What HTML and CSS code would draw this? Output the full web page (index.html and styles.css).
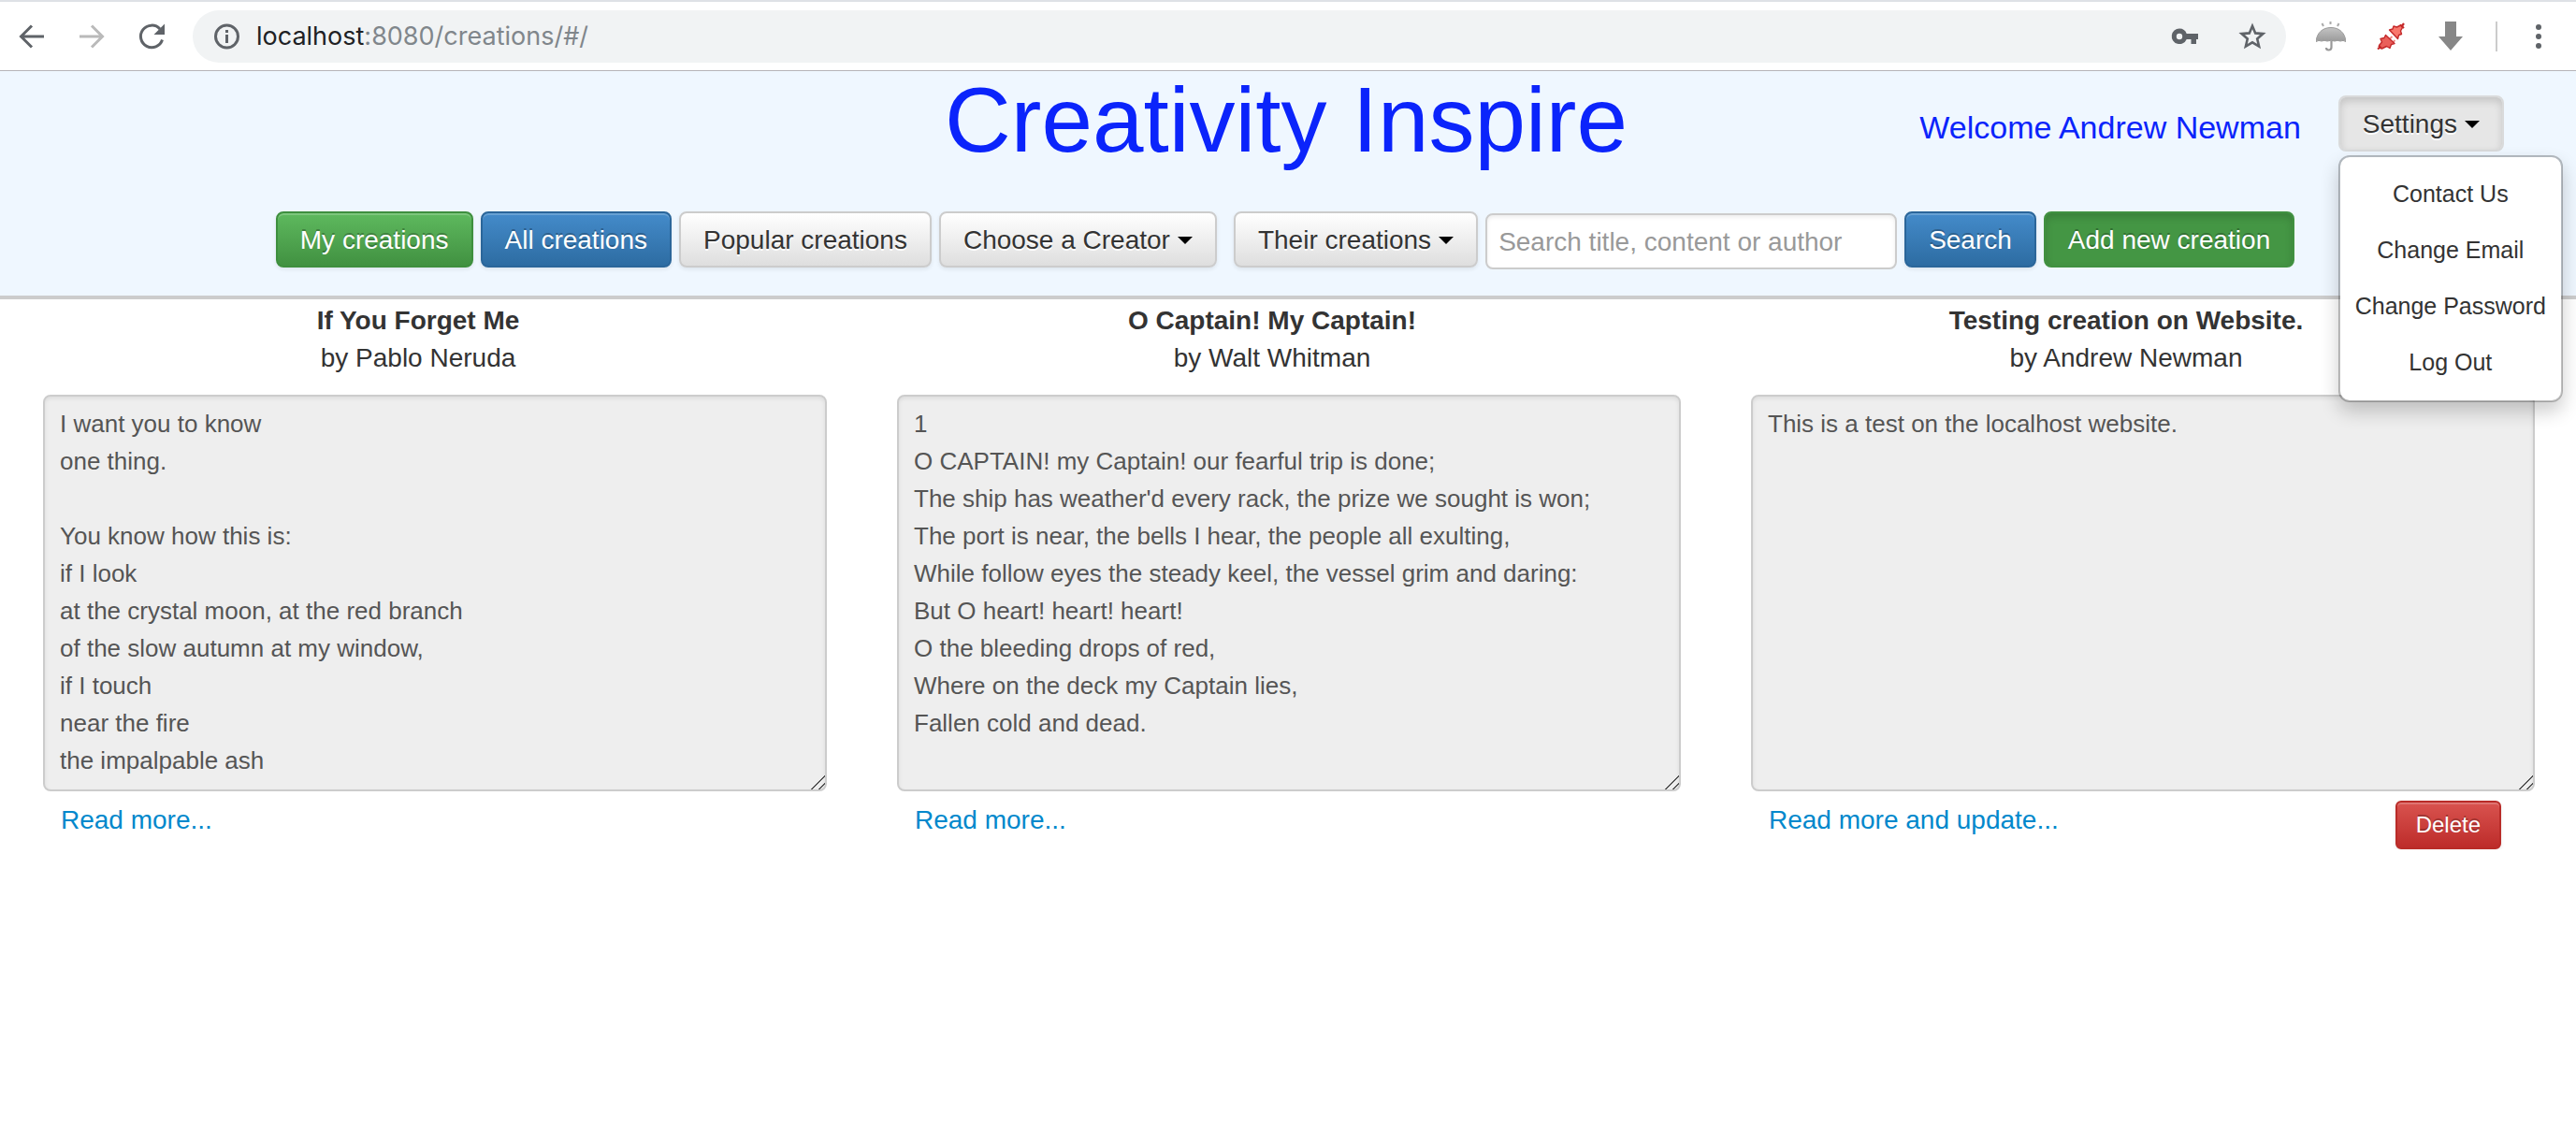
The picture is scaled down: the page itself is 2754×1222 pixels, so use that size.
FILE: index.html
```html
<!DOCTYPE html>
<html lang="en">
<head>
  <meta charset="utf-8">
  <title>Creativity Inspire</title>
  <link rel="stylesheet" href="styles.css">
</head>
<body>
  <div class="toolbar">
    <div class="nav-icons">
      <button class="icon-btn" type="button" aria-label="Back">
        <svg class="icon" viewBox="0 0 32 32"><path d="M29 16H5M16 4.500L4.500 16L16 27.500" fill="none" stroke="#5f6368" stroke-width="3"/></svg>
      </button>
      <button class="icon-btn" type="button" aria-label="Forward">
        <svg class="icon" viewBox="0 0 32 32"><path d="M3 16H27M16 4.500L27.500 16L16 27.500" fill="none" stroke="#bababa" stroke-width="3"/></svg>
      </button>
      <button class="icon-btn" type="button" aria-label="Reload">
        <svg class="icon" viewBox="0 0 32 32"><path d="M27.500 19.500A11.800 11.800 0 1 1 25 8" fill="none" stroke="#5f6368" stroke-width="3"/><path d="M30 2.500V14H18.500Z" fill="#5f6368"/></svg>
      </button>
    </div>
    <div class="omnibox">
      <svg class="icon" viewBox="0 0 32 32"><circle cx="16.500" cy="16" r="12" fill="none" stroke="#5f6368" stroke-width="3"/><path d="M15 9h3v3h-3zM15 14h3v9h-3z" fill="#5f6368"/></svg>
      <span class="url">localhost<span class="url-path">:8080/creations/#/</span></span>
      <button class="icon-btn key" type="button" aria-label="Saved password">
        <svg class="icon" viewBox="0 0 32 32"><path fill-rule="evenodd" d="M10 7.500a8.300 8.300 0 0 1 7.700 5.500H30v6h-2v5h-5.500v-5h-4.800A8.300 8.300 0 1 1 10 7.500zM10 12.800a3.200 3.200 0 1 0 0 6.400a3.200 3.200 0 0 0 0-6.400z" fill="#5f6368"/></svg>
      </button>
      <button class="icon-btn" type="button" aria-label="Bookmark">
        <svg class="icon" viewBox="0 0 32 32"><path d="M16 4.800L19.200 12.400L27.400 13.100L21.200 18.500L23.100 26.500L16 22.300L8.900 26.500L10.800 18.500L4.600 13.100L12.800 12.400Z" fill="none" stroke="#5f6368" stroke-width="2.600"/></svg>
      </button>
    </div>
    <div class="extensions">
      <button class="icon-btn" type="button" aria-label="Umbrella extension">
        <svg class="icon" viewBox="0 0 32 32">
          <defs><linearGradient id="dome" x1="0" y1="0" x2="0" y2="1"><stop offset="0" stop-color="#c4c4c4"/><stop offset="1" stop-color="#999"/></linearGradient></defs>
          <path d="M6.500 2l1.500 3M15.500 0v3M24.500 2l-1.500 3" stroke="#aaa" stroke-width="2"/>
          <path d="M0 21.500C1 12 7 6.500 16 6.500S31 12 32 21.500Q29 19.500 26 21Q23 19.500 20 21Q16 19.500 12 21Q9 19.500 6 21Q3 19.500 0 21.500Z" fill="url(#dome)" stroke="#999" stroke-width="1"/>
          <path d="M16.500 21V27.500Q16.500 30.500 13.500 30.500Q11 30.500 11 28" fill="none" stroke="#999" stroke-width="2.200"/>
        </svg>
      </button>
      <button class="icon-btn" type="button" aria-label="Connection extension">
        <svg class="icon" viewBox="0 0 32 32">
          <g stroke="#c4292a" stroke-width="1.400" stroke-linejoin="round" fill="#f9776c">
            <path d="M2 29.500L4.500 27.500M3 26L6 29M26 3.500L30 7M27.500 5.500L30 2" fill="none" stroke-width="2.200"/>
            <path d="M14 19.500L17.500 16M17.500 23L20.500 20" fill="none" stroke-width="1.800" stroke="#f08a84"/>
            <path d="M3.500 25.500L6.500 22L5 18.500L9 17.500L10.500 14.500L20 23.500L16.500 24.500L15 28.500L11.500 26.500L6.500 29Z" fill="#ea5f5a"/>
            <path d="M14.500 9L18 8L19 5L22.500 6L26.500 4L28.500 6.500L26.500 10L27.500 13.500L24.500 14.500L23.500 18.500Z"/>
          </g>
        </svg>
      </button>
      <button class="icon-btn" type="button" aria-label="Download extension">
        <svg class="icon" viewBox="0 0 32 32"><path d="M10 0H22V16H29L16 31L3 16H10Z" fill="#878787"/></svg>
      </button>
      <span class="separator"></span>
      <button class="icon-btn" type="button" aria-label="Menu">
        <svg class="icon" viewBox="0 0 32 32" fill="#5f6368"><circle cx="16" cy="6" r="3"/><circle cx="16" cy="16" r="3"/><circle cx="16" cy="26" r="3"/></svg>
      </button>
    </div>
  </div>

  <header class="masthead">
    <div class="brand-row">
      <h1 class="brand">Creativity Inspire</h1>
      <div class="account">
        <span class="welcome">Welcome Andrew Newman</span>
        <div class="dropdown">
          <button class="btn btn-default active" type="button" aria-expanded="true">Settings <span class="caret"></span></button>
          <ul class="menu">
            <li><a href="#contact">Contact Us</a></li>
            <li><a href="#email">Change Email</a></li>
            <li><a href="#password">Change Password</a></li>
            <li><a href="#logout">Log Out</a></li>
          </ul>
        </div>
      </div>
    </div>
    <form class="actions">
      <button class="btn btn-success" type="button">My creations</button>
      <button class="btn btn-primary" type="button">All creations</button>
      <button class="btn btn-default" type="button">Popular creations</button>
      <button class="btn btn-default creator" type="button">Choose a Creator <span class="caret"></span></button>
      <button class="btn btn-default" type="button">Their creations <span class="caret"></span></button>
      <input class="search" type="text" placeholder="Search title, content or author" aria-label="Search title, content or author">
      <button class="btn btn-primary" type="button">Search</button>
      <button class="btn btn-success active" type="button">Add new creation</button>
    </form>
  </header>

  <main class="creations">
    <article class="creation">
      <label class="heading" for="c1"><strong>If You Forget Me</strong><span>by Pablo Neruda</span></label>
      <textarea class="content" id="c1" readonly>I want you to know
one thing.

You know how this is:
if I look
at the crystal moon, at the red branch
of the slow autumn at my window,
if I touch
near the fire
the impalpable ash</textarea>
      <div class="links"><a href="#more1">Read more...</a></div>
    </article>
    <article class="creation">
      <label class="heading" for="c2"><strong>O Captain! My Captain!</strong><span>by Walt Whitman</span></label>
      <textarea class="content" id="c2" readonly>1
O CAPTAIN! my Captain! our fearful trip is done;
The ship has weather'd every rack, the prize we sought is won;
The port is near, the bells I hear, the people all exulting,
While follow eyes the steady keel, the vessel grim and daring:
But O heart! heart! heart!
O the bleeding drops of red,
Where on the deck my Captain lies,
Fallen cold and dead.</textarea>
      <div class="links"><a href="#more2">Read more...</a></div>
    </article>
    <article class="creation">
      <label class="heading" for="c3"><strong>Testing creation on Website.</strong><span>by Andrew Newman</span></label>
      <textarea class="content" id="c3" readonly>This is a test on the localhost website.</textarea>
      <div class="links"><a href="#more3">Read more and update...</a><button class="btn btn-danger" type="button">Delete</button></div>
    </article>
  </main>
</body>
</html>
```
FILE: styles.css
```css
* { box-sizing: border-box; }

body {
  margin: 0;
  background: #fff;
  color: #333;
  font-family: "Liberation Sans", Arial, sans-serif;
  font-size: 28px;
  line-height: 40px;
}

/* Browser bar */
.toolbar {
  display: flex;
  align-items: center;
  height: 76px;
  padding: 0 24px 0 18px;
  background: #fff;
  border-top: 2px solid #dee1e6;
  border-bottom: 1px solid #b6b4b8;
}
.nav-icons { display: flex; gap: 32px; margin-right: 28px; }
.icon-btn { display: flex; padding: 0; border: 0; background: none; }
.icon { display: block; width: 32px; height: 32px; flex: none; }
.omnibox {
  display: flex;
  flex: 1;
  align-items: center;
  height: 56px;
  padding: 0 20px;
  border-radius: 28px;
  background: #f1f3f4;
}
.url {
  flex: 1;
  margin-left: 16px;
  color: #202124;
  font-family: Inter, Roboto, sans-serif;
  font-size: 27px;
}
.url-path { color: #80868b; }
.key { margin-right: 40px; }
.extensions { display: flex; align-items: center; gap: 32px; margin-left: 32px; }
.separator { width: 2px; height: 32px; margin-right: -4px; background: #ccc; }

/* Site header */
.masthead { background: #eff7ff; border-bottom: 4px solid #ccc; padding-bottom: 30px; }
.brand-row {
  display: grid;
  grid-template-columns: 1fr auto 1fr;
  min-height: 150px;
  padding-right: 4px;
}
.brand {
  grid-column: 2;
  margin: 0;
  color: #0b24fb;
  font-size: 98px;
  font-weight: 400;
  line-height: 104px;
}
.account {
  display: flex;
  align-items: flex-start;
  justify-content: flex-end;
  gap: 40px;
  padding: 26px 73px 0 0;
}
.welcome { margin-top: 14px; color: #0b24fb; font-size: 34px; }

.btn {
  display: inline-flex;
  align-items: center;
  justify-content: center;
  gap: 8px;
  padding: 9px 24px 7px;
  border: 2px solid;
  border-radius: 8px;
  font: inherit;
  white-space: nowrap;
  box-shadow: inset 0 2px 0 rgba(255, 255, 255, .2), 0 2px 4px rgba(0, 0, 0, .08);
}
.btn-default { color: #333; background: linear-gradient(#fff, #dedede); border-color: #ccc; text-shadow: 0 2px 0 #fff; }
.btn-success, .btn-primary, .btn-danger { color: #fff; text-shadow: 0 -2px 0 rgba(0, 0, 0, .25); }
.btn-success { background: linear-gradient(#5eb95e, #419141); border-color: #3e8f3e; }
.btn-primary { background: linear-gradient(#448bca, #2d6ca2); border-color: #2b669a; }
.btn-danger {
  padding: 4px 20px;
  border-radius: 6px;
  font-size: 24px;
  background: linear-gradient(#d9534f, #bd2c2a);
  border-color: #b92c28;
}
.btn.active { box-shadow: inset 0 4px 8px rgba(0, 0, 0, .15); }
.btn-default.active { background: #e6e6e6; border-color: #d9dadb; }
.btn-success.active { background: #449644; border-color: #419141; }

.caret { border: 8px solid transparent; border-top-color: #000; border-bottom: 0; }

.dropdown { position: relative; }
.menu {
  position: absolute;
  z-index: 2;
  top: 64px;
  left: 0;
  width: 240px;
  margin: 0;
  padding: 9px 0 11px;
  border: 2px solid rgba(0, 0, 0, .25);
  border-radius: 12px;
  background: #fff;
  background-clip: padding-box;
  box-shadow: 0 10px 20px rgba(0, 0, 0, .2);
  list-style: none;
  text-align: center;
}
.menu a {
  display: block;
  padding: 10px 0;
  color: #333;
  font-size: 25px;
  text-decoration: none;
  white-space: nowrap;
}

.actions { display: flex; justify-content: center; gap: 8px; padding-right: 6px; }
.creator { margin-right: 10px; }
.search {
  width: 440px;
  height: 60px;
  margin: 2px 0 -2px;
  padding: 9px 12px 7px;
  border: 2px solid #ccc;
  border-radius: 8px;
  background: #fff;
  font: inherit;
  box-shadow: inset 0 2px 4px rgba(0, 0, 0, .08);
}
.search::placeholder { color: #999; opacity: 1; }

/* Creation columns */
.creations {
  display: grid;
  grid-template-columns: repeat(3, 1fr);
  gap: 75px;
  padding: 3px 44px 0 46px;
}
.heading { display: flex; flex-direction: column; padding-right: 36px; text-align: center; }
.content {
  display: block;
  width: 100%;
  height: 424px;
  margin: 19px 0 0;
  padding: 9px 16px;
  border: 2px solid #ccc;
  border-radius: 8px;
  background: #eee;
  color: #555;
  font: inherit;
  font-size: 26px;
  line-height: 40px;
  resize: both;
  overflow: hidden;
  box-shadow: inset 0 2px 4px rgba(0, 0, 0, .08);
}
.content::-webkit-resizer {
  background: linear-gradient(135deg, transparent 47%, #555 47%, #555 54%, transparent 54%, transparent 75%, #555 75%, #555 82%, transparent 82%);
}
.links { display: flex; align-items: flex-start; justify-content: space-between; padding: 10px 36px 0 19px; }
.links a { margin-top: 1px; color: #08c; text-decoration: none; }
```
